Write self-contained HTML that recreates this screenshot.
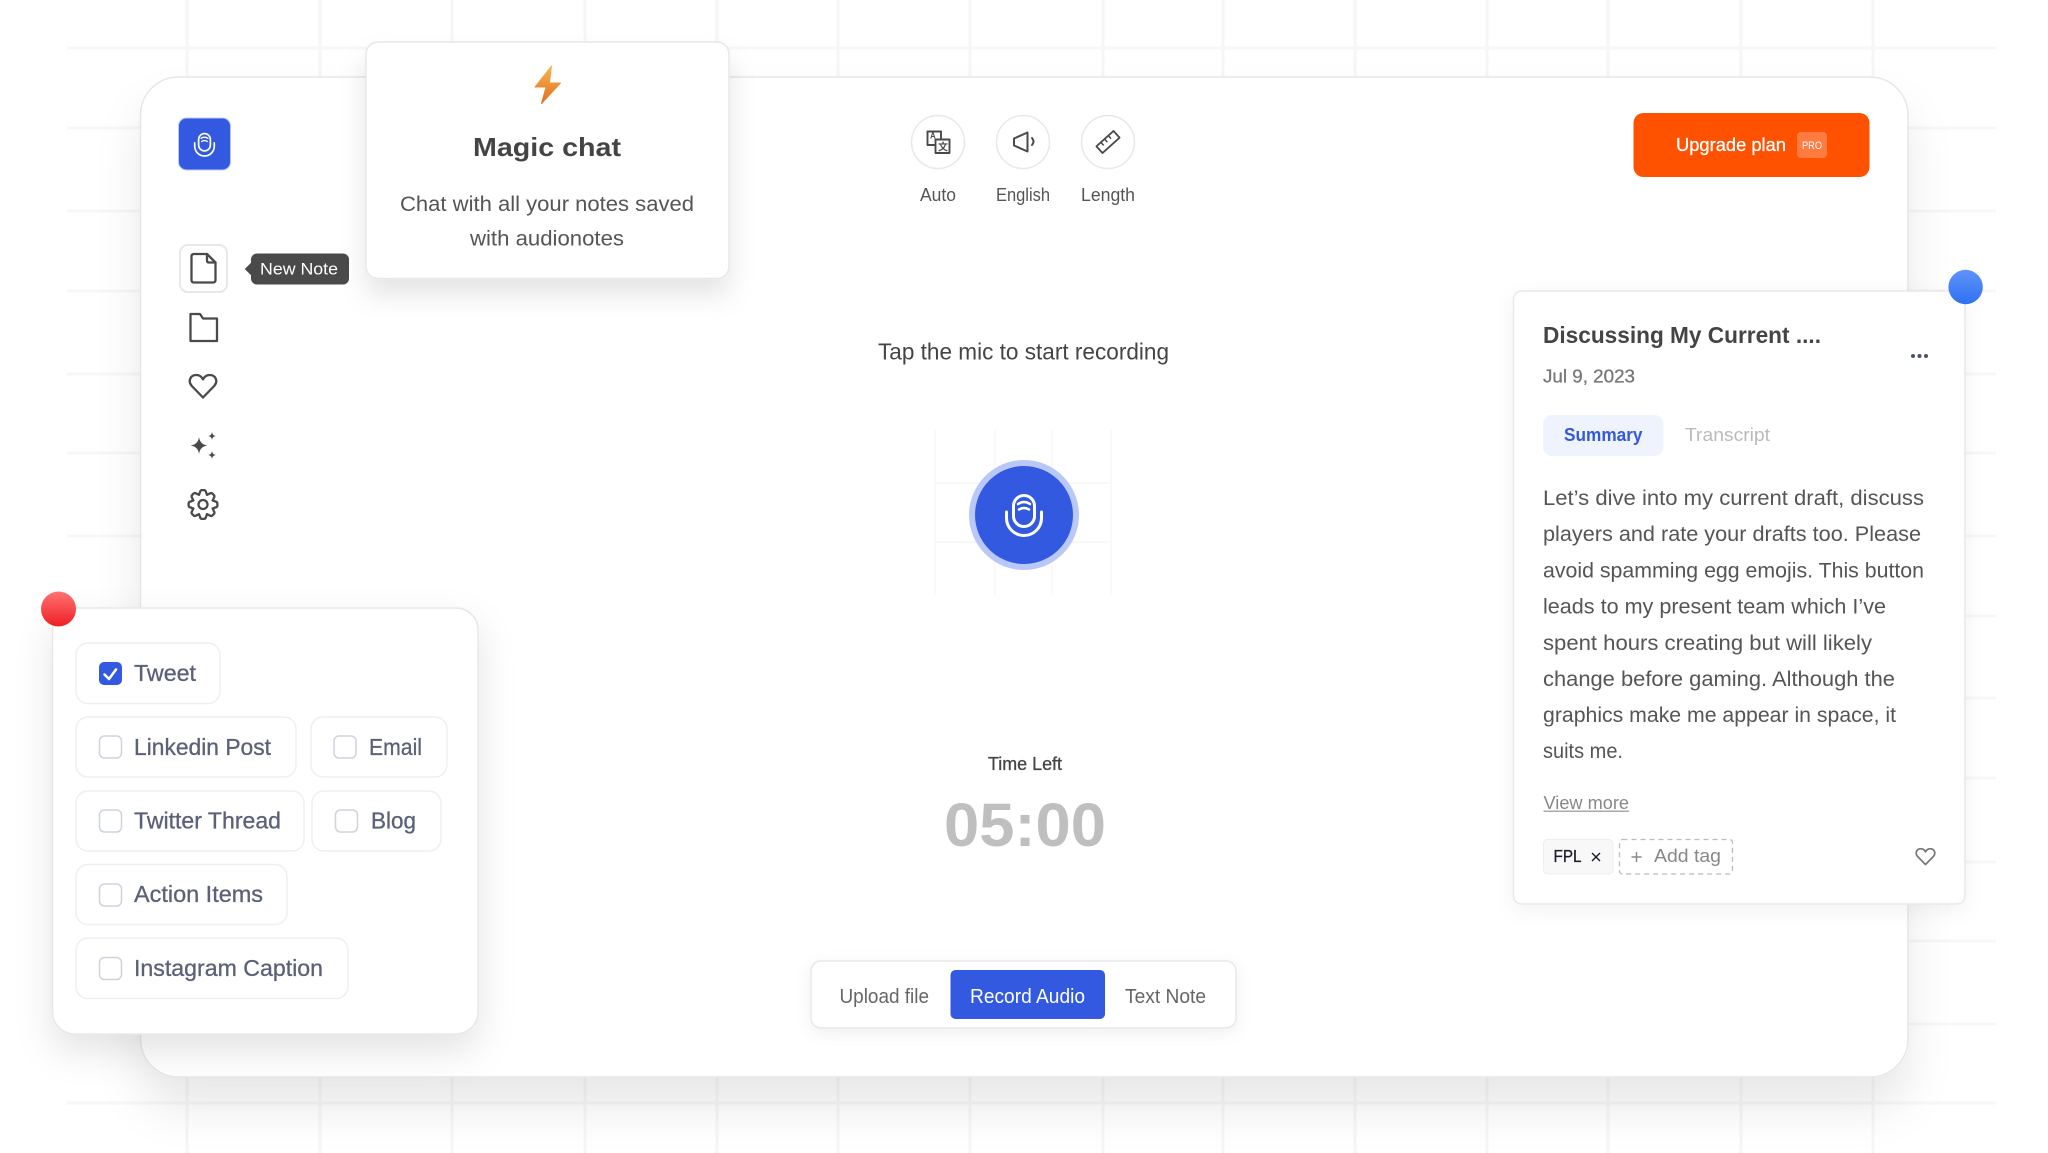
<!DOCTYPE html>
<html lang="en">
<head>
<meta charset="utf-8">
<title>Audionotes</title>
<style>
html,body{margin:0;padding:0;background:#fff;width:2048px;height:1153px;overflow:hidden}
svg{display:block}
text{font-family:"Liberation Sans",Arial,sans-serif}
.m{stroke-width:.3px}
</style>
</head>
<body>
<svg xmlns="http://www.w3.org/2000/svg" width="2048" height="1153" viewBox="0 0 2048 1153">
<defs>
<filter id="sMain" filterUnits="userSpaceOnUse" x="0" y="0" width="2048" height="1153"><feDropShadow dx="0" dy="30" stdDeviation="22" flood-color="#000" flood-opacity=".09"/></filter>
<filter id="sPanel" filterUnits="userSpaceOnUse" x="0" y="540" width="560" height="613"><feDropShadow dx="0" dy="16" stdDeviation="18" flood-color="#000" flood-opacity=".11"/></filter>
<filter id="sMagic" filterUnits="userSpaceOnUse" x="300" y="0" width="500" height="360"><feDropShadow dx="0" dy="16" stdDeviation="13" flood-color="#000" flood-opacity=".1"/></filter>
<filter id="sNote" filterUnits="userSpaceOnUse" x="1460" y="250" width="560" height="710"><feDropShadow dx="0" dy="6" stdDeviation="10" flood-color="#000" flood-opacity=".05"/></filter>
<filter id="sTab" filterUnits="userSpaceOnUse" x="780" y="930" width="490" height="130"><feDropShadow dx="0" dy="4" stdDeviation="8" flood-color="#000" flood-opacity=".06"/></filter>
<linearGradient id="bolt" x1="0" y1="0" x2="0" y2="1"><stop offset="0" stop-color="#f9b552"/><stop offset="1" stop-color="#e0701f"/></linearGradient>
<linearGradient id="red" x1="0" y1="0" x2="0" y2="1"><stop offset="0" stop-color="#ff7272"/><stop offset="1" stop-color="#ef1f24"/></linearGradient>
<linearGradient id="blue" x1="0" y1="0" x2="0" y2="1"><stop offset="0" stop-color="#5f93f8"/><stop offset="1" stop-color="#2f72f4"/></linearGradient>
<g id="mic" fill="none" stroke="#fff" stroke-width="3" stroke-linecap="round">
<rect x="-10.5" y="-19.5" width="21" height="31" rx="10.5"/>
<path d="M-17.5 -3v6a17.5 17.5 0 0 0 35 0v-6"/>
<path d="M-6 -11q6-4 12 0M-5 -5.500q5-3 10 0" stroke-width="2.500"/>
</g>
<path id="heart" d="M203 402.500L191.800 391C187.500 386 190.500 380 196.300 380C199.300 380 201.500 381.500 203 384.300C204.500 381.500 206.700 380 209.700 380C215.500 380 218.500 386 214.200 391Z"/>
<path id="tooth" d="M-4.020 -9.700L-3 -12.400Q-2.600 -14.400 -1 -14.400H1Q2.600 -14.400 3 -12.400L4.020 -9.700"/>
</defs>

<!-- background grid -->
<g fill="none">
<path stroke="#f6f6f6" stroke-width="3" d="M187 0V1153M320 0V1153M452 0V1153M585 0V1153M717 0V1153M838 0V1153M970 0V1153M1103 0V1153M1223 0V1153M1355 0V1153M1487 0V1153M1608 0V1153M1741 0V1153M1873 0V1153"/>
<path stroke="#f7f7f7" stroke-width="3" d="M67 48H1996M67 128H1996M67 211H1996M67 291H1996M67 374H1996M67 453H1996M67 536H1996M67 616H1996M67 698H1996M67 778H1996M67 862H1996M67 941H1996M67 1024H1996M67 1103H1996"/>
</g>

<!-- main card -->
<rect x="140.500" y="77" width="1767.500" height="1000" rx="38" fill="#fff" stroke="#e6e6e6" stroke-width="1.500" filter="url(#sMain)"/>

<!-- logo -->
<rect x="178.500" y="118" width="52" height="52" rx="8" fill="#3259e0" stroke="#b9c8f8" stroke-width="1"/>
<use href="#mic" transform="translate(204.500 144.500) scale(.56)"/>

<!-- sidebar -->
<rect x="180" y="245" width="47" height="47" rx="8" fill="#fff" stroke="#e8e8e8" stroke-width="2"/>
<g fill="none" stroke="#4a4a4a" stroke-width="2.300" stroke-linejoin="round" stroke-linecap="round">
<path d="M194 254H207L215.500 262.500V280Q215.500 282.500 213 282.500H194Q191.500 282.500 191.500 280V256.500Q191.500 254 194 254Z"/>
<path d="M207 254V260.500Q207 262.500 209 262.500H215.500"/>
<path d="M190.500 314H200L203 318.500H217V341H190.500Z"/>
<use href="#heart" transform="translate(0 -5)"/>
<g transform="translate(203 504.500)">
<use href="#tooth"/><use href="#tooth" transform="rotate(45)"/><use href="#tooth" transform="rotate(90)"/><use href="#tooth" transform="rotate(135)"/><use href="#tooth" transform="rotate(180)"/><use href="#tooth" transform="rotate(225)"/><use href="#tooth" transform="rotate(270)"/><use href="#tooth" transform="rotate(315)"/>
<circle r="4.500"/>
</g>
</g>
<g fill="#4a4a4a" transform="translate(0 -5.500)">
<path d="M199 442.500Q200 450 207.500 451Q200 452 199 459.500Q198 452 190.500 451Q198 450 199 442.500Z"/>
<path d="M212 437.500Q212.400 441.100 216 441.500Q212.400 441.900 212 445.500Q211.600 441.900 208 441.500Q211.600 441.100 212 437.500Z"/>
<path d="M212 456.500Q212.400 460.100 216 460.500Q212.400 460.900 212 464.500Q211.600 460.900 208 460.500Q211.600 460.100 212 456.500Z"/>
</g>

<!-- tooltip -->
<path d="M245.500 269L251.500 263V275Z" fill="#4a4a4a" stroke="#4a4a4a" stroke-linejoin="round"/>
<rect x="251" y="253.500" width="98" height="31" rx="6" fill="#4a4a4a"/>
<text x="260" y="274.500" font-size="17" fill="#fff" textLength="78" lengthAdjust="spacingAndGlyphs">New Note</text>

<!-- magic chat -->
<rect x="366" y="42" width="363" height="236.500" rx="12" fill="#fff" stroke="#e8e8e8" stroke-width="1.500" filter="url(#sMagic)"/>
<path d="M551.500 66L535 87H546L541.500 103.500L560.500 83H549.500Z" fill="url(#bolt)" stroke="url(#bolt)" stroke-width="1" stroke-linejoin="round"/>
<text x="473" y="156" font-size="26" font-weight="700" fill="#444" textLength="148" lengthAdjust="spacingAndGlyphs">Magic chat</text>
<text x="400" y="211" font-size="21" fill="#555" textLength="294" lengthAdjust="spacingAndGlyphs">Chat with all your notes saved</text>
<text x="470" y="245.500" font-size="21" fill="#555" textLength="154" lengthAdjust="spacingAndGlyphs">with audionotes</text>

<!-- top icons -->
<g fill="#fff" stroke="#e8e8e8" stroke-width="1.500">
<circle cx="938" cy="142" r="26.500"/><circle cx="1023" cy="142" r="26.500"/><circle cx="1108" cy="142" r="26.500"/>
</g>
<g fill="none" stroke="#4a4a4a" stroke-width="1.900" stroke-linejoin="round" stroke-linecap="round">
<path d="M935.500 145H927.500V131.500H941V139"/>
<rect x="935.500" y="139.500" width="14" height="13.500" fill="#fff"/>
<path d="M1014 138.500L1027.500 132.500V151.500L1014 145.500Z" stroke-width="2"/>
<path d="M1032 138Q1035 141.500 1032 145" stroke-width="2"/>
<g transform="translate(1108 142) rotate(-42)">
<rect x="-11.500" y="-4.500" width="23" height="9" stroke-width="1.800"/>
<path d="M-5.500 -4.500V-1M-.5 -4.500V-1M4.500 -4.500V-1" stroke-width="1.500"/>
</g>
</g>
<text x="930" y="138.500" font-size="8" font-weight="700" fill="#4a4a4a">A</text>
<text x="938" y="150.500" font-size="10" font-weight="700" fill="#4a4a4a" style="font-family:'Liberation Sans','Noto Sans CJK SC',sans-serif">文</text>
<g font-size="18" fill="#555">
<text x="920" y="201" textLength="36" lengthAdjust="spacingAndGlyphs">Auto</text>
<text x="996" y="201" textLength="54" lengthAdjust="spacingAndGlyphs">English</text>
<text x="1081" y="201" textLength="54" lengthAdjust="spacingAndGlyphs">Length</text>
</g>

<!-- upgrade -->
<rect x="1633.500" y="113" width="236" height="64" rx="10" fill="#fe5200"/>
<text x="1676" y="151" font-size="18.500" fill="#fff" stroke="#fff" class="m" textLength="110" lengthAdjust="spacingAndGlyphs">Upgrade plan</text>
<rect x="1797" y="132" width="30" height="26" rx="4" fill="#ff7b40"/>
<text x="1802" y="149" font-size="11" fill="#fff" textLength="20" lengthAdjust="spacingAndGlyphs">PRO</text>

<!-- center -->
<text x="878" y="359.500" font-size="23" fill="#444" textLength="291" lengthAdjust="spacingAndGlyphs">Tap the mic to start recording</text>
<g stroke="#f9f9f9" stroke-width="2" fill="none">
<path d="M935 430V595M995 430V595M1052 430V595M1111 430V595M935 483H1111M935 542H1111"/>
</g>
<circle cx="1024" cy="515" r="55" fill="#b9c8f8"/>
<circle cx="1024" cy="515" r="49" fill="#3259e0"/>
<use href="#mic" transform="translate(1024 515)"/>

<text x="988" y="770" font-size="18" fill="#444" stroke="#444" class="m" textLength="74" lengthAdjust="spacingAndGlyphs">Time Left</text>
<text x="944" y="846" font-size="61" font-weight="700" fill="#bfbfbf" textLength="162" lengthAdjust="spacingAndGlyphs">05:00</text>

<!-- tabs -->
<rect x="811" y="961" width="425" height="67" rx="10" fill="#fff" stroke="#e8e8e8" stroke-width="1.500" filter="url(#sTab)"/>
<rect x="950.500" y="970" width="154.500" height="49" rx="5" fill="#3259e0"/>
<g font-size="20">
<text x="839.500" y="1003" fill="#666" textLength="89.500" lengthAdjust="spacingAndGlyphs">Upload file</text>
<text x="970" y="1003" fill="#fff" textLength="115" lengthAdjust="spacingAndGlyphs">Record Audio</text>
<text x="1125" y="1003" fill="#666" textLength="81" lengthAdjust="spacingAndGlyphs">Text Note</text>
</g>

<!-- left panel -->
<rect x="52.500" y="608" width="425.500" height="426" rx="22" fill="#fff" stroke="#e6e7ea" stroke-width="1.500" filter="url(#sPanel)"/>
<g fill="#fff" stroke="#eeeff3" stroke-width="1.500">
<rect x="76" y="643" width="144" height="60.500" rx="12"/>
<rect x="76" y="717" width="220" height="60" rx="12"/>
<rect x="311" y="717" width="136" height="60" rx="12"/>
<rect x="76" y="791" width="228" height="60" rx="12"/>
<rect x="312" y="791" width="129" height="60" rx="12"/>
<rect x="76" y="864.500" width="211" height="60" rx="12"/>
<rect x="76" y="938" width="272" height="60.500" rx="12"/>
</g>
<rect x="99" y="662" width="23" height="23" rx="5" fill="#3259e0"/>
<path d="M104.500 674.500L109 679L116 669.500" fill="none" stroke="#fff" stroke-width="2.500" stroke-linecap="round" stroke-linejoin="round"/>
<g fill="#fff" stroke="#cfd3dc" stroke-width="1.500">
<rect x="99.500" y="736" width="22" height="22" rx="5"/>
<rect x="334" y="736" width="22" height="22" rx="5"/>
<rect x="99.500" y="810" width="22" height="22" rx="5"/>
<rect x="335.500" y="810" width="22" height="22" rx="5"/>
<rect x="99.500" y="884" width="22" height="22" rx="5"/>
<rect x="99.500" y="957.500" width="22" height="22" rx="5"/>
</g>
<g font-size="23" fill="#5a6178" stroke="#5a6178" class="m">
<text x="134" y="681" textLength="62" lengthAdjust="spacingAndGlyphs">Tweet</text>
<text x="134" y="755" textLength="137" lengthAdjust="spacingAndGlyphs">Linkedin Post</text>
<text x="369" y="755" textLength="53" lengthAdjust="spacingAndGlyphs">Email</text>
<text x="134" y="828.500" textLength="147" lengthAdjust="spacingAndGlyphs">Twitter Thread</text>
<text x="371" y="828.500" textLength="45" lengthAdjust="spacingAndGlyphs">Blog</text>
<text x="134" y="902" textLength="129" lengthAdjust="spacingAndGlyphs">Action Items</text>
<text x="134" y="976" textLength="189" lengthAdjust="spacingAndGlyphs">Instagram Caption</text>
</g>

<!-- note card -->
<rect x="1513.500" y="291" width="451.500" height="613" rx="8" fill="#fff" stroke="#e8e8e8" stroke-width="1.500" filter="url(#sNote)"/>
<text x="1543" y="343" font-size="23" font-weight="700" fill="#444" textLength="278" lengthAdjust="spacingAndGlyphs">Discussing My Current ....</text>
<text x="1543" y="382.500" font-size="18" fill="#777" stroke="#777" class="m" textLength="92" lengthAdjust="spacingAndGlyphs">Jul 9, 2023</text>
<g fill="#4a5068"><circle cx="1913" cy="356" r="2"/><circle cx="1919.500" cy="356" r="2"/><circle cx="1926" cy="356" r="2"/></g>
<rect x="1543" y="415" width="120.500" height="41" rx="9" fill="#eef3fe"/>
<text x="1564" y="441" font-size="18" font-weight="700" fill="#3259d6" textLength="78.500" lengthAdjust="spacingAndGlyphs">Summary</text>
<text x="1685" y="441" font-size="18" fill="#bbb" textLength="85" lengthAdjust="spacingAndGlyphs">Transcript</text>
<g font-size="21" fill="#555">
<text x="1543" y="505" textLength="381" lengthAdjust="spacingAndGlyphs">Let’s dive into my current draft, discuss</text>
<text x="1543" y="541" textLength="378" lengthAdjust="spacingAndGlyphs">players and rate your drafts too. Please</text>
<text x="1543" y="577.500" textLength="381" lengthAdjust="spacingAndGlyphs">avoid spamming egg emojis. This button</text>
<text x="1543" y="613.500" textLength="343" lengthAdjust="spacingAndGlyphs">leads to my present team which I’ve</text>
<text x="1543" y="650" textLength="329" lengthAdjust="spacingAndGlyphs">spent hours creating but will likely</text>
<text x="1543" y="686" textLength="352" lengthAdjust="spacingAndGlyphs">change before gaming. Although the</text>
<text x="1543" y="722" textLength="353" lengthAdjust="spacingAndGlyphs">graphics make me appear in space, it</text>
<text x="1543" y="758" textLength="80" lengthAdjust="spacingAndGlyphs">suits me.</text>
</g>
<text x="1543.500" y="809" font-size="18" fill="#888" textLength="85.500" lengthAdjust="spacingAndGlyphs">View more</text>
<rect x="1543.500" y="810.500" width="85.500" height="1.500" fill="#aaa"/>
<rect x="1543.500" y="839.500" width="69.500" height="34.500" rx="4" fill="#f8f8f8" stroke="#eeeeee" stroke-width="1"/>
<text x="1553.500" y="862" font-size="17.500" fill="#1a1c2a" stroke="#1a1c2a" class="m" textLength="28" lengthAdjust="spacingAndGlyphs">FPL</text>
<path d="M1592 853L1600 861M1600 853L1592 861" stroke="#1a1c2a" stroke-width="1.400" fill="none"/>
<rect x="1619.500" y="839.500" width="113" height="34.500" rx="3" fill="#fff" stroke="#bbb" stroke-width="1.300" stroke-dasharray="5 4"/>
<path d="M1631.500 857H1641.500M1636.500 852V862" stroke="#888" stroke-width="1.400" fill="none"/>
<text x="1654" y="862" font-size="18" fill="#888" textLength="67" lengthAdjust="spacingAndGlyphs">Add tag</text>
<use href="#heart" transform="translate(1925.500 856.500) scale(.7) translate(-203 -391)" fill="none" stroke="#777" stroke-width="2.500" stroke-linejoin="round"/>

<!-- dots -->
<circle cx="58.500" cy="609" r="17.500" fill="url(#red)"/>
<circle cx="1965.600" cy="287" r="17.200" fill="url(#blue)"/>
</svg>
</body>
</html>
